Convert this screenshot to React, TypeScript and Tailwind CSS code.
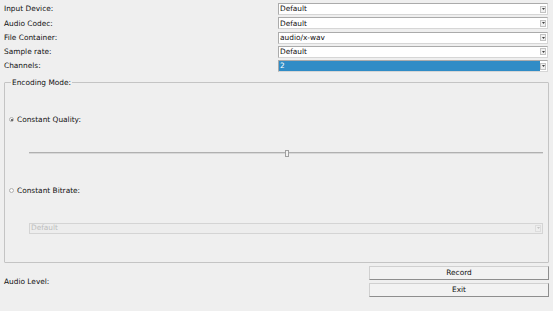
import React from 'react';

const fields = [
  { label: 'Input Device:', value: 'Default' },
  { label: 'Audio Codec:', value: 'Default' },
  { label: 'File Container:', value: 'audio/x-wav' },
  { label: 'Sample rate:', value: 'Default' },
  { label: 'Channels:', value: '2', selected: true },
];

function Arrow({ disabled }: { disabled?: boolean }) {
  return (
    <div className={`w-[6px] h-[7px] mr-[1px] flex items-center justify-center border ${disabled ? 'border-[#dddddd] bg-[#eeeeee]' : 'border-[#c2c2c2] bg-[#f0f0f0]'}`}>
      <svg width="3" height="2" viewBox="0 0 3 2">
        <path d="M0 0h3L1.5 2z" fill={disabled ? '#c4c4c4' : '#404040'} />
      </svg>
    </div>
  );
}

function Combo({ value, selected }: { value: string; selected?: boolean }) {
  return (
    <div className="w-[270px] h-[12px] flex items-center border border-[#ababab] border-b-[#d6d6d6] border-r-[#d6d6d6] bg-white">
      <div className={`flex-1 h-full flex items-center pl-[1px] ${selected ? 'bg-[#308cc6] text-white' : 'text-[#111]'}`}>
        {value}
      </div>
      <Arrow />
    </div>
  );
}

function Radio({ checked }: { checked?: boolean }) {
  return (
    <span className="w-[5px] h-[5px] rounded-full border border-[#b0b0b0] bg-[#fafafa] flex items-center justify-center mr-[3px]">
      {checked && <span className="w-[2px] h-[2px] rounded-full bg-[#404040]" />}
    </span>
  );
}

export default function App() {
  return (
    <div
      className="w-[553px] h-[311px] bg-[#efefef] text-[#111] text-[7.4px] leading-none overflow-hidden"
      style={{ fontFamily: '"DejaVu Sans", sans-serif' }}
    >
      {/* Form */}
      <div className="pt-[3px] pl-[4px] pr-[5px] flex flex-col gap-[2.3px]">
        {fields.map(f => (
          <div key={f.label} className="flex items-center justify-between h-[12px]">
            <span>{f.label}</span>
            <Combo value={f.value} selected={f.selected} />
          </div>
        ))}
      </div>

      {/* Encoding mode group */}
      <fieldset className="mx-[4px] mt-[7px] h-[184px] border border-[#c4c4c4] rounded-[1px] pl-[4px] pr-[5px]">
        <legend className="ml-[2px] px-[1px]">Encoding Mode:</legend>
        <div className="flex items-center mt-[28px] h-[10px]">
          <Radio checked />
          <span>Constant Quality:</span>
        </div>
        <div className="ml-[20px] mt-[25px] h-[6px] relative flex items-center">
          <div className="w-full h-[2px] bg-[#b0b0b0] border-b border-[#d8d8d8]" />
          <div className="absolute left-[256px] top-0 w-[4px] h-[7px] bg-[#f2f2f2] border border-[#a0a0a0]" />
        </div>
        <div className="flex items-center mt-[30px] h-[10px]">
          <Radio />
          <span>Constant Bitrate:</span>
        </div>
        <div className="ml-[20px] mt-[27px] h-[11px] flex items-center border border-[#d4d4d4] bg-[#ededed] text-[#bdbdbd]">
          <span className="flex-1 pl-[1px]">Default</span>
          <Arrow disabled />
        </div>
      </fieldset>

      {/* Bottom */}
      <div className="flex pl-[4px] pr-[4px] mt-[3px]">
        <div className="flex-1 flex items-center">Audio Level:</div>
        <div className="w-[180px] flex flex-col gap-[3px]">
          <button className="h-[14px] bg-[#f2f2f2] border border-[#d0d0d0] border-r-[#8e8e8e] border-b-[#8e8e8e] text-[#111]">Record</button>
          <button className="h-[14px] bg-[#f2f2f2] border border-[#d0d0d0] border-r-[#8e8e8e] border-b-[#8e8e8e] text-[#111]">Exit</button>
        </div>
      </div>
    </div>
  );
}
